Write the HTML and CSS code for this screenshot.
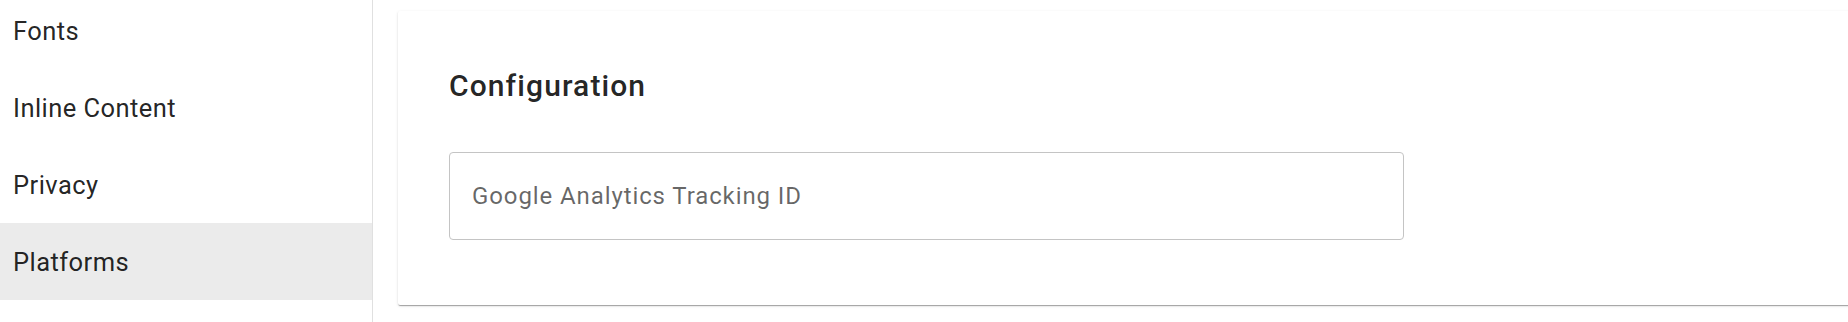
FILE: index.html
```html
<!DOCTYPE html>
<html lang="en">
<head>
<meta charset="utf-8">
<title>Settings - Platforms</title>
<link rel="stylesheet" href="styles.css">
</head>
<body>
<div class="layout">
  <nav class="sidebar">
    <ul class="nav-list">
      <li class="nav-item">Fonts</li>
      <li class="nav-item">Inline Content</li>
      <li class="nav-item">Privacy</li>
      <li class="nav-item active">Platforms</li>
    </ul>
  </nav>
  <main class="main">
    <section class="card">
      <h2 class="card-title">Configuration</h2>
      <div class="field">
        <input class="field-input" type="text" placeholder="Google Analytics Tracking ID">
      </div>
    </section>
  </main>
</div>
</body>
</html>
```

FILE: styles.css
```css
html, body {
  margin: 0;
  padding: 0;
  background: #ffffff;
  overflow: hidden;
  height: 100%;
}

body {
  font-family: Roboto, "Liberation Sans", Arial, sans-serif;
  color: rgba(0, 0, 0, 0.87);
}

.layout {
  display: flex;
  height: 322px;
}

.sidebar {
  width: 372px;
  flex-shrink: 0;
  border-right: 1px solid #e0e0e0;
  overflow: hidden;
}

.nav-list {
  list-style: none;
  margin: -8px 0 0 0;
  padding: 0;
}

.nav-item {
  height: 77px;
  display: flex;
  align-items: center;
  padding-left: 13px;
  font-size: 25.5px;
  letter-spacing: 0.45px;
  color: rgba(0, 0, 0, 0.87);
}

.nav-item.active {
  background: #ebebeb;
}

.main {
  flex: 1;
  padding: 11px 0 0 25px;
  overflow: hidden;
}

.card {
  width: 1600px;
  background: #ffffff;
  border-radius: 2px;
  box-shadow: 0 2px 1px -1px rgba(0, 0, 0, 0.2), 0 1px 1px 0 rgba(0, 0, 0, 0.14), 0 1px 3px 0 rgba(0, 0, 0, 0.12);
  padding: 57px 51px 65px 51px;
  box-sizing: border-box;
}

.card-title {
  margin: 0 0 48px 0;
  font-size: 30px;
  line-height: 36px;
  font-weight: 500;
  letter-spacing: 1.1px;
  color: rgba(0, 0, 0, 0.87);
}

.field {
  width: 955px;
}

.field-input {
  display: block;
  width: 100%;
  height: 88px;
  box-sizing: border-box;
  border: 1px solid #c4c4c4;
  border-radius: 4px;
  padding: 0 22px;
  font-family: Roboto, "Liberation Sans", Arial, sans-serif;
  font-size: 24px;
  letter-spacing: 0.9px;
  color: rgba(0, 0, 0, 0.87);
  background: #ffffff;
  outline: none;
}

.field-input::placeholder {
  color: rgba(0, 0, 0, 0.6);
  opacity: 1;
}
```
